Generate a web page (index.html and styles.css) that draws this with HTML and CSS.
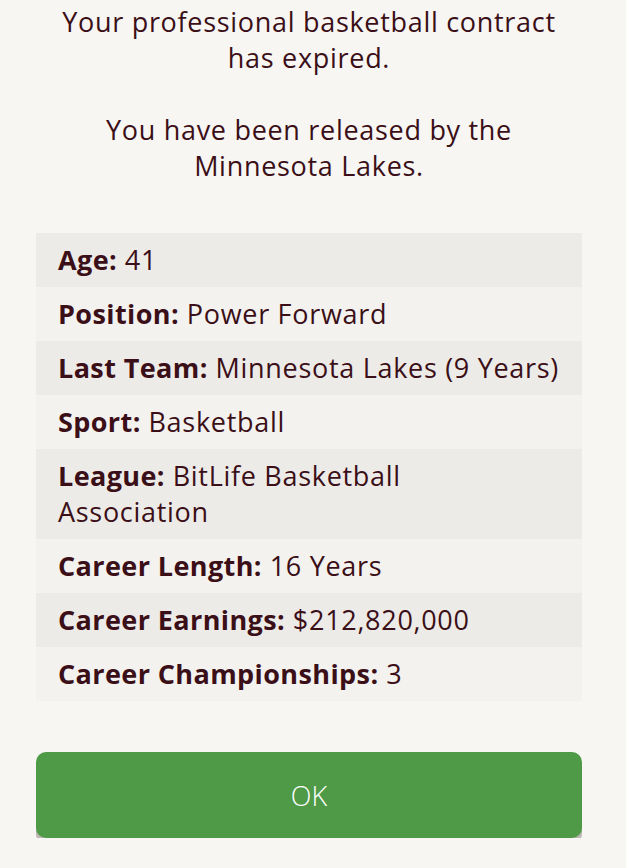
FILE: index.html
```html
<!DOCTYPE html>
<html lang="en">
<head>
    <meta charset="UTF-8">
    <meta name="viewport" content="width=device-width, initial-scale=1.0">
    <title>Contract Expired</title>
    <link rel="stylesheet" href="styles.css">
</head>
<body>
    <div class="popup">
        <div class="message">
            <p>Your professional basketball contract has expired.</p>
            <p>You have been released by the Minnesota Lakes.</p>
        </div>

        <div class="stats">
            <div class="stat-row"><b>Age:</b> 41</div>
            <div class="stat-row"><b>Position:</b> Power Forward</div>
            <div class="stat-row"><b>Last Team:</b> Minnesota Lakes (9 Years)</div>
            <div class="stat-row"><b>Sport:</b> Basketball</div>
            <div class="stat-row league"><b>League:</b> BitLife Basketball Association</div>
            <div class="stat-row"><b>Career Length:</b> 16 Years</div>
            <div class="stat-row"><b>Career Earnings:</b> $212,820,000</div>
            <div class="stat-row"><b>Career Championships:</b> 3</div>
        </div>

        <button class="ok-button">OK</button>
    </div>
</body>
</html>
```

FILE: styles.css
```css
body {
    font-family: "Open Sans", "Noto Sans", sans-serif;
    margin: 0;
    background-color: #f7f6f3;
    color: #3b0f17;
}

.popup {
    width: 546px;
    margin-left: 36px;
    padding-top: 4px;
}

.message {
    text-align: center;
    font-size: 27px;
    letter-spacing: 0.7px;
    line-height: 36px;
    padding: 0 10px;
}

.message p {
    margin: 0 0 36px 0;
}

.message p:last-child {
    margin-bottom: 49px;
}

.stats {
    display: flex;
    flex-direction: column;
}

.stat-row {
    font-size: 27px;
    letter-spacing: 0.7px;
    line-height: 36px;
    padding: 9px 22px;
    background-color: #f3f2ef;
    white-space: nowrap;
}

.stat-row:nth-child(odd) {
    background-color: #edebe8;
}

.stat-row b {
    font-weight: 700;
    letter-spacing: 0.4px;
}

.league {
    white-space: normal;
    padding-right: 140px;
}

.ok-button {
    display: block;
    width: 100%;
    height: 86px;
    margin-top: 51px;
    background-color: #4e9a47;
    color: #ffffff;
    border: none;
    border-radius: 10px;
    box-shadow: 0 6px 0 #bdb8b6;
    font-family: "Open Sans", "Noto Sans", sans-serif;
    font-weight: 300;
    font-size: 27px;
    padding-top: 2px;
    cursor: pointer;
}
```
